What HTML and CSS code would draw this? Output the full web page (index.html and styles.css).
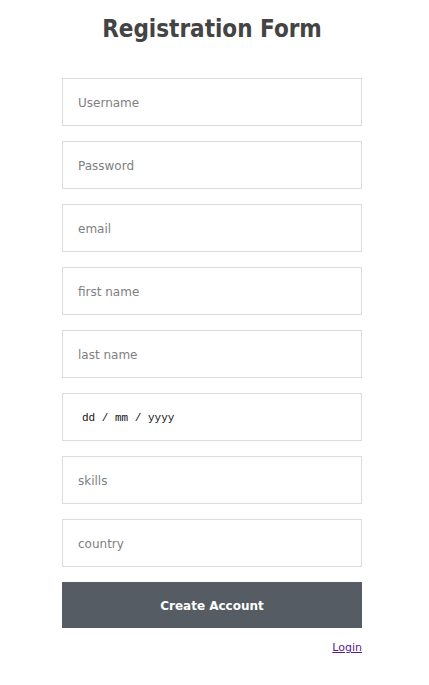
FILE: index.html
```html
<!DOCTYPE html>
<html>
<head>
<meta charset="utf-8">
<link rel="stylesheet" href="styles.css">
</head>
<body>
<form class="form">
  <h1 class="title">Registration Form</h1>
  <input class="field" type="text" placeholder="Username">
  <input class="field" type="password" placeholder="Password">
  <input class="field" type="text" placeholder="email">
  <input class="field" type="text" placeholder="first name">
  <input class="field" type="text" placeholder="last name">
  <input class="field date" type="text" placeholder="dd / mm / yyyy">
  <input class="field" type="text" placeholder="skills">
  <input class="field" type="text" placeholder="country">
  <button class="submit" type="button">Create Account</button>
  <div class="links"><a class="login" href="#">Login</a></div>
</form>
</body>
</html>
```
FILE: styles.css
```css
html, body {
  margin: 0;
  padding: 0;
  background: #fff;
}
body {
  font-family: "DejaVu Sans", Verdana, sans-serif;
}
.form {
  width: 300px;
  margin: 0 0 0 62px;
  display: flex;
  flex-direction: column;
}
.title {
  margin: 14px 0 0 0;
  height: 64px;
  text-align: center;
  font-family: "DejaVu Sans Condensed", "DejaVu Sans", sans-serif;
  font-stretch: condensed;
  font-size: 24px;
  font-weight: bold;
  color: #444444;
  line-height: 30px;
}
.field {
  box-sizing: border-box;
  width: 300px;
  height: 48px;
  margin: 0 0 15px 0;
  padding: 2px 15px 0 15px;
  border: 1px solid #dcdcdc;
  outline: none;
  font-family: "DejaVu Sans", Verdana, sans-serif;
  font-size: 12px;
  color: #333;
  background: #fff;
}
.field::placeholder {
  color: #808080;
}
.date {
  padding-left: 19px;
  font-family: "Liberation Mono", "Courier New", monospace;
  font-size: 11px;
}
.date::placeholder {
  color: #111;
}
.submit {
  box-sizing: border-box;
  width: 300px;
  height: 46px;
  margin: 0;
  padding-top: 2px;
  border: none;
  background: #555c63;
  color: #fff;
  font-family: "DejaVu Sans", Verdana, sans-serif;
  font-size: 12px;
  font-weight: bold;
}
.links {
  text-align: right;
  margin-top: 8px;
}
.login {
  font-family: "DejaVu Sans", Verdana, sans-serif;
  font-size: 11px;
  color: #551a8b;
}
```
